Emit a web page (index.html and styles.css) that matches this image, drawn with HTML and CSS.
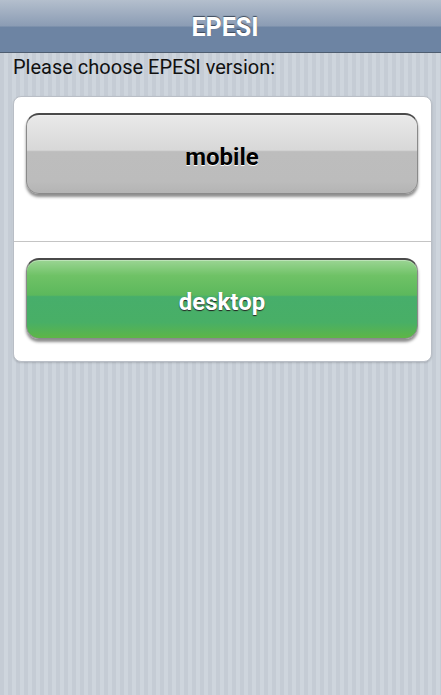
FILE: index.html
```html
<!DOCTYPE html>
<html>
<head>
<meta charset="utf-8">
<link rel="stylesheet" href="styles.css">
</head>
<body>
<header class="bar"><h1 class="title">EPESI</h1></header>
<p class="prompt">Please choose EPESI version:</p>
<ul class="card">
  <li class="item item-first"><a class="btn btn-gray" href="#">mobile</a></li>
  <li class="item item-last"><a class="btn btn-green" href="#">desktop</a></li>
</ul>
</body>
</html>
```

FILE: styles.css
```css
html, body {
  margin: 0;
  padding: 0;
  height: 100%;
}
body {
  font-family: Roboto, "Noto Sans", sans-serif;
  background-color: #c7ced7;
  background-image: repeating-linear-gradient(90deg, #c5ccd5 0, #c5ccd5 4px, #ced5dd 4px, #ced5dd 8px);
}
.bar {
  box-sizing: border-box;
  height: 53px;
  padding: 2px 0 0 9px;
  border-bottom: 1px solid #4e5d70;
  background: linear-gradient(#b4bfcd 0%, #8b9cb4 50%, #6d84a3 52%, #6d84a3 100%);
  display: flex;
  align-items: center;
  justify-content: center;
}
.title {
  margin: 0;
  color: #fff;
  font-size: 25px;
  font-weight: bold;
  text-shadow: 0 -1px 1px #3c4a5c;
}
.prompt {
  margin: 0;
  padding: 2px 0 0 13px;
  height: 41px;
  font-size: 20px;
  line-height: 24px;
  color: #111;
}
.card {
  list-style: none;
  margin: 0 9px 0 13px;
  padding: 0;
  background: #fff;
  border: 1px solid #b9bec6;
  border-radius: 8px;
  box-shadow: 0 1px 2px rgba(0,0,0,0.15);
}
.item {
  padding: 16px 13px 0 12px;
}
.item-first {
  height: 128px;
  border-bottom: 1px solid #c4c4c4;
}
.item-last {
  padding-top: 16px;
  height: 103px;
}
.btn {
  display: flex;
  align-items: center;
  justify-content: center;
  box-sizing: border-box;
  height: 81px;
  padding-top: 5px;
  border-radius: 13px;
  border: 1px solid #8a8a8a;
  border-top: 2px solid #4a4a4a;
  text-decoration: none;
  font-size: 24px;
  font-weight: bold;
  box-shadow: 0 3px 3px rgba(0,0,0,0.45), inset 0 1px 0 rgba(255,255,255,0.35);
}
.btn-gray {
  color: #000;
  text-shadow: 0 1px 0 #fff;
  background: linear-gradient(#e9e9e9 0%, #d8d8d8 45%, #bdbdbd 47%, #bcbcbc 85%, #b4b4b4 100%);
}
.btn-green {
  color: #fff;
  text-shadow: 0 1px 1px #222;
  background: linear-gradient(#9bd594 0%, #6fc266 20%, #5cb85c 45%, #47ae6b 47%, #48af66 80%, #5eb646 100%);
}
```
